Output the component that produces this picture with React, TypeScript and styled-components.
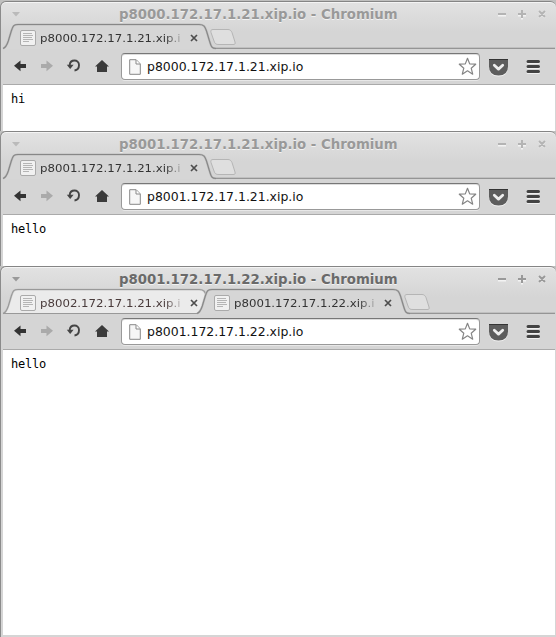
import React from 'react';
import styled, { createGlobalStyle } from 'styled-components';

const Global = createGlobalStyle`
  * { box-sizing: border-box; }
  body { margin: 0; background: #c4c4c4; overflow: hidden; }
`;

const Desktop = styled.main`
  width: 556px;
  height: 637px;
  padding-top: 1px;
  display: flex;
  flex-direction: column;
  font-family: 'DejaVu Sans', sans-serif;
  overflow: hidden;
  background: #c0c0bf;
`;

const Frame = styled.section<{ $height: number }>`
  height: ${(p) => p.$height}px;
  flex: none;
  background: linear-gradient(#e2e2e2, #d5d5d5 30px);
  background-color: #d5d5d5;
  border-top: 1px solid #858585;
  border-left: 1px solid #8b8b8b;
  border-radius: 6px 6px 0 0;
  box-shadow: inset 0 1px 0 #f4f4f4;
  padding: 0 1px 0 2px;
  display: flex;
  flex-direction: column;
`;

const TitleBar = styled.header<{ $focused: boolean }>`
  height: 22px;
  flex: none;
  display: grid;
  grid-template-columns: 116px 1fr 61px;
  color: ${(p) => (p.$focused ? '#6a6a6a' : '#999')};
`;

const Title = styled.h1`
  margin: 4px 0 0;
  font-size: 13.3px;
  line-height: 17px;
  font-weight: bold;
  white-space: nowrap;
  text-shadow: 0 1px 0 #f2f2f2;
`;

const TitleIcon = styled.svg`
  display: block;
  overflow: visible;
`;

const TabStrip = styled.nav`
  height: 25px;
  flex: none;
  display: flex;
  position: relative;
  box-shadow: inset 0 -1px 0 #959595, inset 0 -2px 0 #c0c0c0;
`;

const TabBox = styled.div<{ $active: boolean }>`
  width: 194px;
  height: 25px;
  flex: none;
  position: relative;
  z-index: ${(p) => (p.$active ? 2 : 1)};
  display: flex;
  align-items: center;
  padding: 3px 0 0 17px;
`;

const TabShape = styled.svg`
  position: absolute;
  left: 0;
  top: 0;
  overflow: visible;
`;

const TabIcon = styled.svg`
  position: relative;
  flex: none;
  overflow: visible;
`;

const TabLabel = styled.span<{ $active: boolean }>`
  position: relative;
  margin-left: 4px;
  width: 141px;
  flex: none;
  height: 17px;
  overflow: hidden;
  white-space: nowrap;
  font-size: 11px;
  line-height: 17px;
  color: ${(p) => (p.$active ? '#333' : '#493b3b')};
  mask-image: linear-gradient(to right, #000 124px, transparent 146px);
`;

const Stretch = styled.span`
  display: inline-block;
  transform: scaleX(1.068);
  transform-origin: left;
`;

const TabClose = styled.svg`
  position: relative;
  margin-left: 9px;
  flex: none;
`;

const NewTab = styled.svg`
  margin: 4px 0 0 12px;
  overflow: visible;
  position: relative;
  z-index: 3;
`;

const Toolbar = styled.div`
  height: 36px;
  flex: none;
  display: flex;
  align-items: flex-start;
  border-bottom: 1px solid #aaa;
  padding: 4px 0 0 10px;
`;

const NavIcons = styled.svg`
  margin-top: 4px;
  flex: none;
`;

const AddressBar = styled.div`
  width: 359px;
  height: 27px;
  margin-left: 8px;
  flex: none;
  border: 1px solid #999;
  border-top-color: #777;
  border-radius: 4px;
  background: #fff;
  box-shadow: inset 0 1px 0 #ddd, 0 1px 0 #e8e8e8;
  display: flex;
  align-items: center;
  padding: 0 2px 0 7px;
`;

const Url = styled.span`
  flex: 1;
  margin-left: 6px;
  font-size: 12.45px;
  line-height: 18px;
  color: #111;
  white-space: nowrap;
`;

const ToolIcons = styled.svg`
  margin: 5px 0 0 8px;
  flex: none;
`;

const Page = styled.article`
  flex: 1;
  background: #fff;
  padding: 6px 8px;
  font: 12px/17px 'DejaVu Sans Mono', monospace;
  letter-spacing: -0.22px;
  color: #000;
`;

const Bottom = styled.div`
  height: 2px;
  flex: none;
`;

type TabData = { label: string; active: boolean };

function Tab({ label, active }: TabData) {
  const outline =
    'M0 24.5 C3 23.5 4 21 5.3 17 L8.3 7 C10 1.5 11 .5 15 .5 H196 C201 .5 202 2.5 203.5 7 L206.5 17 C208 22 208.5 24.5 213 24.5';
  return (
    <TabBox $active={active}>
      <TabShape width="214" height="25" fill="none">
        <path d={outline + ' V25 H0 Z'} fill={active ? '#d6d6d6' : '#ebebeb'} />
        {active && <path d="M2 24.5H211" stroke="#d6d6d6" strokeWidth="2" />}
        <path d={outline} stroke={active ? '#bdbdbd' : '#cacaca'} strokeWidth="2.2" />
        <path d={outline + (active ? '' : ' H0')} stroke={active ? '#878787' : '#999'} strokeWidth="1.1" />
      </TabShape>
      <TabIcon width="16" height="16">
        <rect x=".5" y=".5" width="15" height="15" rx="1.5" fill="#f1f1f1" stroke="#aaa" />
        <path d="M3 3.5h9M3 5.5h10M3 7.5h9M3 9.5h10M3 11.5h6" stroke="#b5b5b5" />
      </TabIcon>
      <TabLabel $active={active}><Stretch>{label}</Stretch></TabLabel>
      <TabClose width="8" height="8">
        <path d="M1 1l6 6M7 1L1 7" stroke="#4d4d4d" strokeWidth="1.7" />
      </TabClose>
    </TabBox>
  );
}

type BrowserProps = {
  height: number;
  host: string;
  tabs: TabData[];
  body: string;
  focused?: boolean;
  last?: boolean;
};

function Browser({ height, host, tabs, body, focused = false, last = false }: BrowserProps) {
  return (
    <Frame $height={height}>
      <TitleBar $focused={focused}>
        <TitleIcon width="24" height="22">
          <path d="M9 10h8l-4 4.5z" fill={focused ? '#999' : '#bababa'} />
        </TitleIcon>
        <Title>{host} - Chromium</Title>
        <TitleIcon width="60" height="22" fill="none" strokeWidth="2">
          <path d="M4 13.5h8M24 13.5h8M28 9.5v8M45 9.5l6 6M51 9.5l-6 6" stroke="#f3f3f3" />
          <path d="M4 12h8M24 12h8M28 8v8M45 9l6 6M51 9l-6 6" stroke={focused ? '#999' : '#b4b4b4'} />
        </TitleIcon>
      </TitleBar>
      <TabStrip>
        {tabs.map((tab) => <Tab key={tab.label} {...tab} />)}
        <NewTab width="28" height="18">
          <path d="M4 1.5H19C21 1.5 22 2.5 23 4.5L26 14C26.5 16 26 16.5 24 16.5H10C7 16.5 6 16 5 13L2 4.5C1.5 2.5 2 1.5 4 1.5Z" fill="#dfdfdf" stroke="#b5b5b5" />
        </NewTab>
      </TabStrip>
      <Toolbar>
        <NavIcons width="100" height="18">
          <path d="M1 8.7L7.5 3.5V7H13v4H7.5v3.2z" fill="#333" />
          <path d="M40 8.7L33.5 3.5V7H28v4h5.5v3.2z" fill="#aaa" />
          <path d="M56.7 8C57.2 2 66 2 66 8c0 3.3-2 5.2-4.5 5.5" fill="none" stroke="#444" strokeWidth="1.9" />
          <path d="M53.8 7.7h6.8L57.2 12z" fill="#444" />
          <path d="M82 9.5l7-6.5L96 9.5h-2V15H84V9.5z" fill="#3b3b3b" />
        </NavIcons>
        <AddressBar>
          <svg width="12" height="16">
            <path d="M.7.7h6.5l4.1 4.2v10.4H.7z" fill="#f6f6f6" stroke="#888" />
            <path d="M7 1v4h4" fill="#fff" stroke="#888" />
          </svg>
          <Url>{host}</Url>
          <svg width="19" height="19" fill="#fff" stroke="#858585" strokeWidth="1.2" strokeLinejoin="round">
            <path d="M9.5 1.3l2.2 5.6 6 .3-4.5 4 1.5 6-5.2-3.4-5.2 3.4 1.5-6-4.5-4 6-.3z" />
          </svg>
        </AddressBar>
        <ToolIcons width="56" height="20">
          <path d="M1 2h19v7.5q0 9-9.5 9T1 9.5z" fill="#f2f2f2" />
          <path d="M1 1h19v7.5q0 9-9.5 9T1 8.5z" fill="#5d5d5d" />
          <path d="M1 1.5h19" stroke="#333" />
          <path d="M6.3 7.3l4.2 3.8 4.2-3.8" fill="none" stroke="#eee" strokeWidth="2.8" strokeLinecap="round" strokeLinejoin="round" />
          <path d="M40 4.5h10.5M40 9.5h10.5M40 14.5h10.5" stroke="#f0f0f0" strokeWidth="3" strokeLinecap="round" />
          <path d="M40 3.5h10.5M40 8.5h10.5M40 13.5h10.5" stroke="#434343" strokeWidth="3" strokeLinecap="round" />
        </ToolIcons>
      </Toolbar>
      <Page>{body}</Page>
      {last && <Bottom />}
    </Frame>
  );
}

export default function App() {
  return (
    <>
      <Global />
      <Desktop>
        <Browser height={130} host="p8000.172.17.1.21.xip.io" body="hi"
          tabs={[{ label: 'p8000.172.17.1.21.xip.io', active: true }]} />
        <Browser height={135} host="p8001.172.17.1.21.xip.io" body="hello"
          tabs={[{ label: 'p8001.172.17.1.21.xip.io', active: true }]} />
        <Browser height={371} host="p8001.172.17.1.22.xip.io" body="hello" focused last
          tabs={[
            { label: 'p8002.172.17.1.21.xip.io', active: false },
            { label: 'p8001.172.17.1.22.xip.io', active: true },
          ]} />
      </Desktop>
    </>
  );
}
